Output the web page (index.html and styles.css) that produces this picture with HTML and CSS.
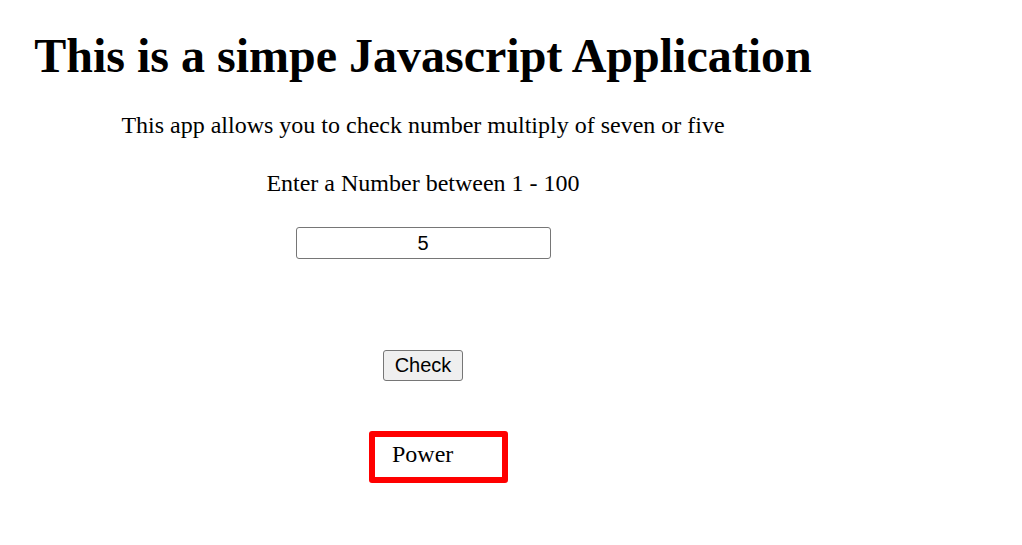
FILE: index.html
```html
<!DOCTYPE html>
<html>
<head>
<meta charset="utf-8">
<link rel="stylesheet" href="styles.css">
</head>
<body>
<div class="page">
  <h1 class="title">This is a simpe Javascript Application</h1>
  <p class="intro">This app allows you to check number multiply of seven or five</p>
  <p class="prompt">Enter a Number between 1 - 100</p>
  <input class="num" type="text" value="5">
  <button class="check">Check</button>
  <div class="result">Power</div>
</div>
</body>
</html>
```
FILE: styles.css
```css
html, body {
  margin: 0;
  padding: 0;
  background: #fff;
}
.page {
  width: 846px;
  display: flex;
  flex-direction: column;
  align-items: center;
  font-family: "Liberation Serif", "Times New Roman", serif;
  color: #000;
}
.title {
  margin: 28px 0 0;
  font-size: 48px;
  font-weight: bold;
  line-height: 55px;
  white-space: nowrap;
}
.intro {
  margin: 28px 0 0;
  font-size: 24px;
  line-height: 28px;
}
.prompt {
  margin: 30px 0 0;
  font-size: 24px;
  line-height: 28px;
}
.num {
  margin: 30px 0 0;
  box-sizing: border-box;
  width: 255px;
  height: 32px;
  border: 1px solid #767676;
  border-radius: 3px;
  font-family: "Liberation Sans", Arial, sans-serif;
  font-size: 20px;
  text-align: center;
  padding: 0 4px;
  color: #000;
  background: #fff;
}
.check {
  margin: 91px 0 0;
  box-sizing: border-box;
  width: 80px;
  height: 31px;
  border: 1px solid #767676;
  border-radius: 3px;
  background: #efefef;
  font-family: "Liberation Sans", Arial, sans-serif;
  font-size: 20px;
  color: #000;
  padding: 0;
}
.result {
  align-self: flex-start;
  margin: 50px 0 0 369px;
  box-sizing: border-box;
  width: 139px;
  height: 52px;
  border: 6px solid #ff0000;
  border-radius: 3px;
  padding: 3px 0 0 17px;
  font-size: 24px;
  line-height: 28px;
}
```
